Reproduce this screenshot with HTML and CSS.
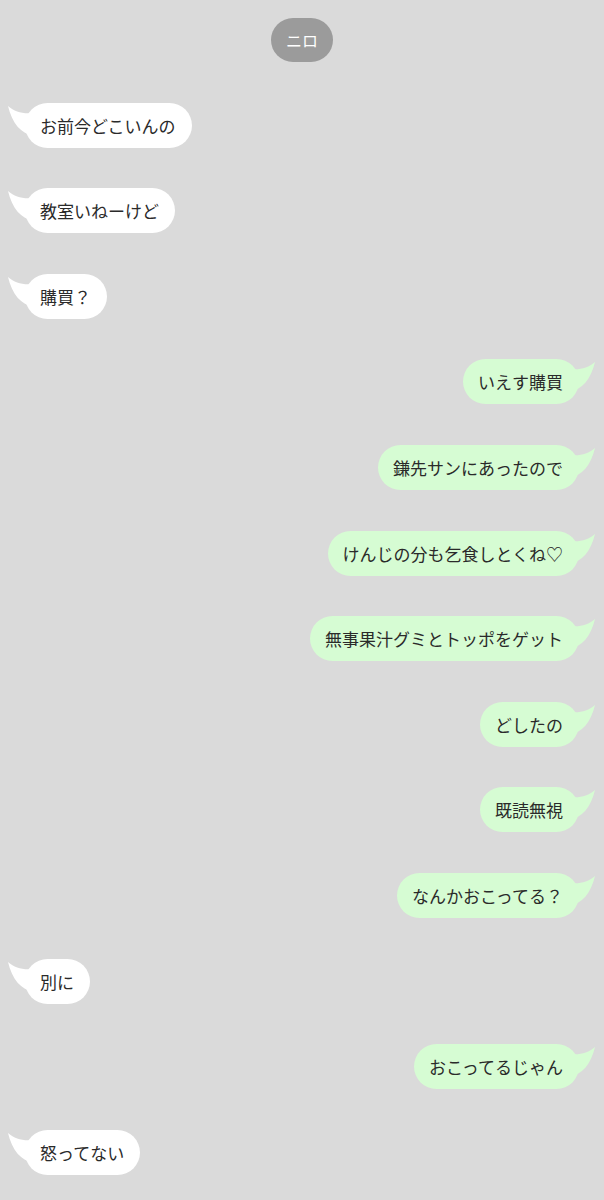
FILE: index.html
```html
<!DOCTYPE html>
<html lang="ja">
<head>
<meta charset="utf-8">
<link rel="stylesheet" href="styles.css">
</head>
<body>
<main class="chat">
  <div class="header"><span class="name">ニロ</span></div>

  <div class="row left"><div class="bubble"><svg class="tail" viewBox="0 0 26 30"><path d="M0,0 C7,6 14,8 26,7 L26,30 C13,28 4,17 0,0 Z"/></svg><span class="txt">お前今どこいんの</span></div></div>
  <div class="row left"><div class="bubble"><svg class="tail" viewBox="0 0 26 30"><path d="M0,0 C7,6 14,8 26,7 L26,30 C13,28 4,17 0,0 Z"/></svg><span class="txt">教室いねーけど</span></div></div>
  <div class="row left"><div class="bubble"><svg class="tail" viewBox="0 0 26 30"><path d="M0,0 C7,6 14,8 26,7 L26,30 C13,28 4,17 0,0 Z"/></svg><span class="txt">購買？</span></div></div>

  <div class="row right"><div class="bubble"><svg class="tail" viewBox="0 0 26 30"><path d="M26,0 C19,6 12,8 0,7 L0,30 C13,28 22,17 26,0 Z"/></svg><span class="txt">いえす購買</span></div></div>
  <div class="row right"><div class="bubble"><svg class="tail" viewBox="0 0 26 30"><path d="M26,0 C19,6 12,8 0,7 L0,30 C13,28 22,17 26,0 Z"/></svg><span class="txt">鎌先サンにあったので</span></div></div>
  <div class="row right"><div class="bubble"><svg class="tail" viewBox="0 0 26 30"><path d="M26,0 C19,6 12,8 0,7 L0,30 C13,28 22,17 26,0 Z"/></svg><span class="txt">けんじの分も乞食しとくね♡</span></div></div>
  <div class="row right"><div class="bubble"><svg class="tail" viewBox="0 0 26 30"><path d="M26,0 C19,6 12,8 0,7 L0,30 C13,28 22,17 26,0 Z"/></svg><span class="txt">無事果汁グミとトッポをゲット</span></div></div>
  <div class="row right"><div class="bubble"><svg class="tail" viewBox="0 0 26 30"><path d="M26,0 C19,6 12,8 0,7 L0,30 C13,28 22,17 26,0 Z"/></svg><span class="txt">どしたの</span></div></div>
  <div class="row right"><div class="bubble"><svg class="tail" viewBox="0 0 26 30"><path d="M26,0 C19,6 12,8 0,7 L0,30 C13,28 22,17 26,0 Z"/></svg><span class="txt">既読無視</span></div></div>
  <div class="row right"><div class="bubble"><svg class="tail" viewBox="0 0 26 30"><path d="M26,0 C19,6 12,8 0,7 L0,30 C13,28 22,17 26,0 Z"/></svg><span class="txt">なんかおこってる？</span></div></div>

  <div class="row left"><div class="bubble"><svg class="tail" viewBox="0 0 26 30"><path d="M0,0 C7,6 14,8 26,7 L26,30 C13,28 4,17 0,0 Z"/></svg><span class="txt">別に</span></div></div>

  <div class="row right"><div class="bubble"><svg class="tail" viewBox="0 0 26 30"><path d="M26,0 C19,6 12,8 0,7 L0,30 C13,28 22,17 26,0 Z"/></svg><span class="txt">おこってるじゃん</span></div></div>

  <div class="row left"><div class="bubble"><svg class="tail" viewBox="0 0 26 30"><path d="M0,0 C7,6 14,8 26,7 L26,30 C13,28 4,17 0,0 Z"/></svg><span class="txt">怒ってない</span></div></div>
</main>
</body>
</html>
```

FILE: styles.css
```css
html, body {
  margin: 0;
  padding: 0;
  background: #dadada;
}
body {
  width: 604px;
  height: 1200px;
  overflow: hidden;
  font-family: "Noto Sans CJK JP", "Noto Sans", sans-serif;
}
.chat {
  display: flex;
  flex-direction: column;
  gap: 40.6px;
  padding: 18px 0 0 0;
}
.header {
  display: flex;
  justify-content: center;
}
.name {
  display: flex;
  align-items: center;
  justify-content: center;
  width: 62px;
  height: 44px;
  border-radius: 22px;
  background: #9b9b9b;
  color: #ffffff;
  font-size: 16px;
}
.row {
  display: flex;
  height: 45px;
}
.row.left {
  justify-content: flex-start;
  padding-left: 25px;
}
.row.right {
  justify-content: flex-end;
  padding-right: 25px;
}
.bubble {
  position: relative;
  display: flex;
  align-items: center;
  height: 45px;
  padding: 0 16px 0 15px;
  border-radius: 23px;
  font-size: 17px;
  color: #2a2a2a;
  white-space: nowrap;
}
.left .bubble {
  background: #ffffff;
  fill: #ffffff;
}
.right .bubble {
  background: #d6fcd3;
  fill: #d6fcd3;
}
.txt {
  position: relative;
}
.tail {
  position: absolute;
  top: 3px;
  width: 26px;
  height: 30px;
}
.left .tail {
  left: -17px;
}
.right .tail {
  right: -16px;
}
```
